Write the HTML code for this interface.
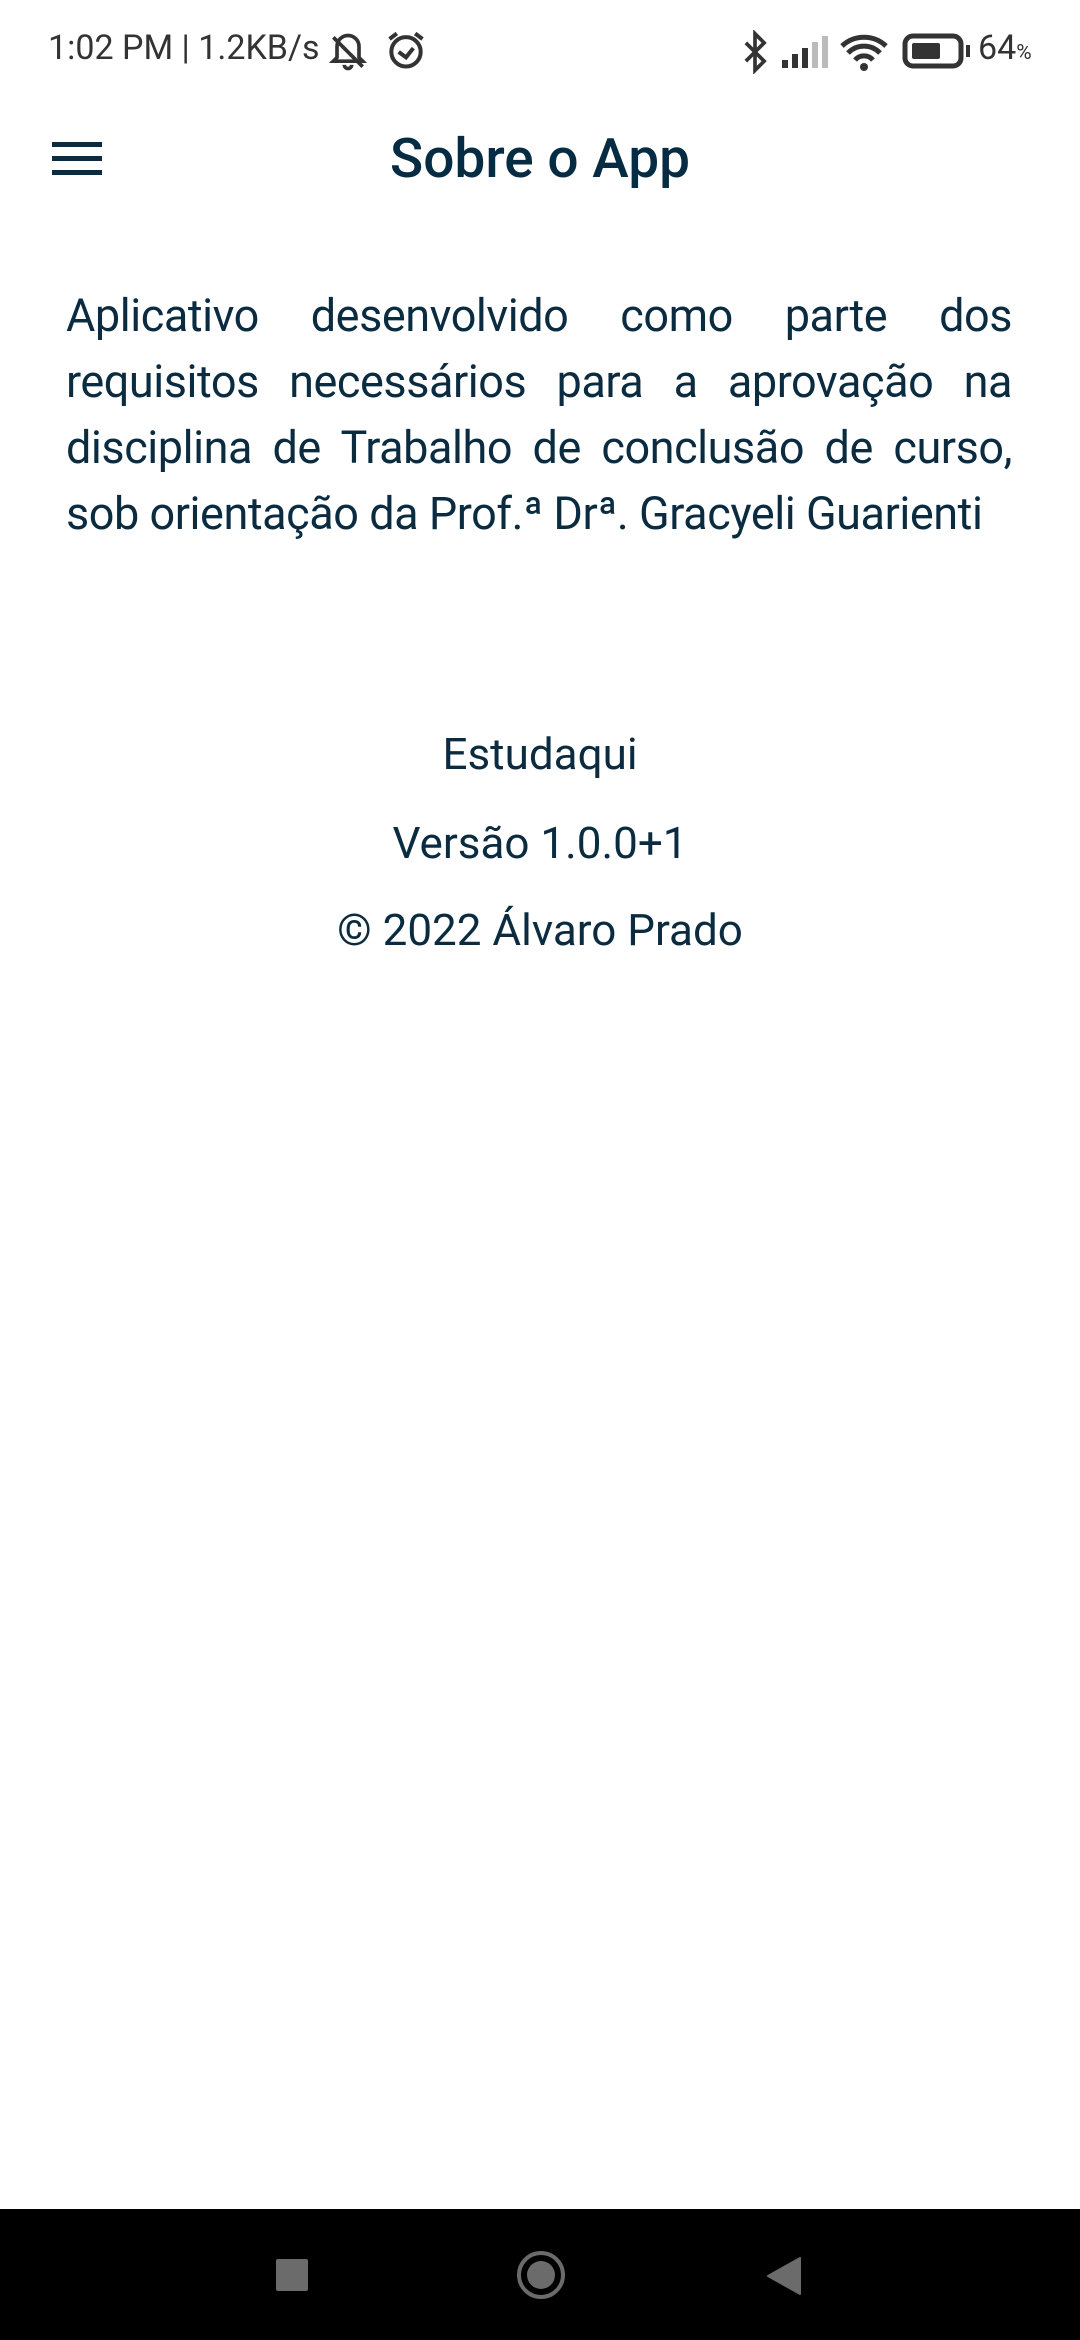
<!DOCTYPE html>
<html><head><meta charset="utf-8"><style>
html,body{margin:0;padding:0;}
body{width:1080px;height:2340px;position:relative;background:#fff;font-family:"Roboto","Liberation Sans",sans-serif;overflow:hidden;color:#0b2c40;}
.abs{position:absolute;}
.sb{font-size:34px;color:#333;top:28px;letter-spacing:0px;}
.body{left:66px;width:946px;top:283px;font-size:45px;line-height:66px;text-align:justify;text-align-last:left;letter-spacing:-0.45px;}
.c{left:0;width:1080px;text-align:center;font-size:44px;letter-spacing:0px;}
</style></head><body>
<div class="abs sb" style="left:48px;">1:02 PM | 1.2KB/s</div>
<svg class="abs" style="left:326px;top:30px" width="44" height="44" viewBox="0 0 24 24"><path d="M12 3a6 6 0 0 0-6 6v6l-2 2h16l-2-2V9a6 6 0 0 0-6-6zM10 19a2 2 0 0 0 4 0" fill="none" stroke="#333" stroke-width="2"/><path d="M4 4l16 16" stroke="#333" stroke-width="2"/></svg>
<svg class="abs" style="left:384px;top:28px" width="44" height="44" viewBox="0 0 24 24"><circle cx="12" cy="13" r="8" fill="none" stroke="#333" stroke-width="2.2"/><path d="M8 13l4 3 4-5M3 6l4-3M21 6l-4-3" fill="none" stroke="#333" stroke-width="2.2"/></svg>
<svg class="abs" style="left:740px;top:30px" width="30" height="44" viewBox="0 0 14 24"><path d="M2 7l10 10-5 5V2l5 5L2 17" fill="none" stroke="#333" stroke-width="2"/></svg>
<svg class="abs" style="left:780px;top:36px" width="52" height="32" viewBox="0 0 26 16"><rect x="1" y="12" width="3" height="4" fill="#333"/><rect x="6" y="9" width="3" height="7" fill="#333"/><rect x="11" y="6" width="3" height="10" fill="#333"/><rect x="16" y="3" width="3" height="13" fill="#bbb"/><rect x="21" y="0" width="3" height="16" fill="#bbb"/></svg>
<svg class="abs" style="left:840px;top:32px" width="48" height="40" viewBox="0 0 24 20"><path d="M1 7a16 16 0 0 1 22 0M4 10.5a11 11 0 0 1 16 0M7.5 14a6 6 0 0 1 9 0" fill="none" stroke="#333" stroke-width="2.5"/><circle cx="12" cy="17.5" r="2" fill="#333"/></svg>
<svg class="abs" style="left:902px;top:33px" width="70" height="36" viewBox="0 0 35 18"><rect x="1.5" y="1.5" width="28" height="15" rx="4" fill="none" stroke="#333" stroke-width="2.5"/><rect x="5" y="5" width="14" height="8" rx="1" fill="#333"/><rect x="32" y="6" width="2" height="6" fill="#333"/></svg>
<div class="abs sb" style="left:978px;">64<span style="font-size:21px">%</span></div>

<svg class="abs" style="left:52px;top:142px" width="50" height="34" viewBox="0 0 50 34"><rect x="0" y="0" width="50" height="5" fill="#0b2c40"/><rect x="0" y="14" width="50" height="5" fill="#0b2c40"/><rect x="0" y="28" width="50" height="5" fill="#0b2c40"/></svg>
<div class="abs c" style="top:126px;font-size:55px;font-weight:500;line-height:66px;color:#062c43;letter-spacing:0px;">Sobre o App</div>

<div class="abs body">Aplicativo desenvolvido como parte dos requisitos necessários para a aprovação na disciplina de Trabalho de conclusão de curso, sob orientação da Prof.ª Drª. Gracyeli Guarienti</div>

<div class="abs c" style="top:726px;line-height:56px;">Estudaqui</div>
<div class="abs c" style="top:815px;line-height:56px;">Versão 1.0.0+1</div>
<div class="abs c" style="top:902px;line-height:56px;">© 2022 Álvaro Prado</div>

<div class="abs" style="left:0;top:2209px;width:1080px;height:131px;background:#000;"></div>
<div class="abs" style="left:276px;top:2259px;width:32px;height:32px;background:#6b6b6b;border-radius:2px;"></div>
<div class="abs" style="left:517px;top:2251px;width:40px;height:40px;border:4px solid #6b6b6b;border-radius:50%;"></div>
<div class="abs" style="left:527px;top:2261px;width:28px;height:28px;background:#6b6b6b;border-radius:50%;"></div>
<svg class="abs" style="left:766px;top:2257px" width="36" height="38" viewBox="0 0 36 38"><path d="M34 1V37L2 19z" fill="#6b6b6b" stroke="#6b6b6b" stroke-linejoin="round" stroke-width="2"/></svg>
</body></html>
